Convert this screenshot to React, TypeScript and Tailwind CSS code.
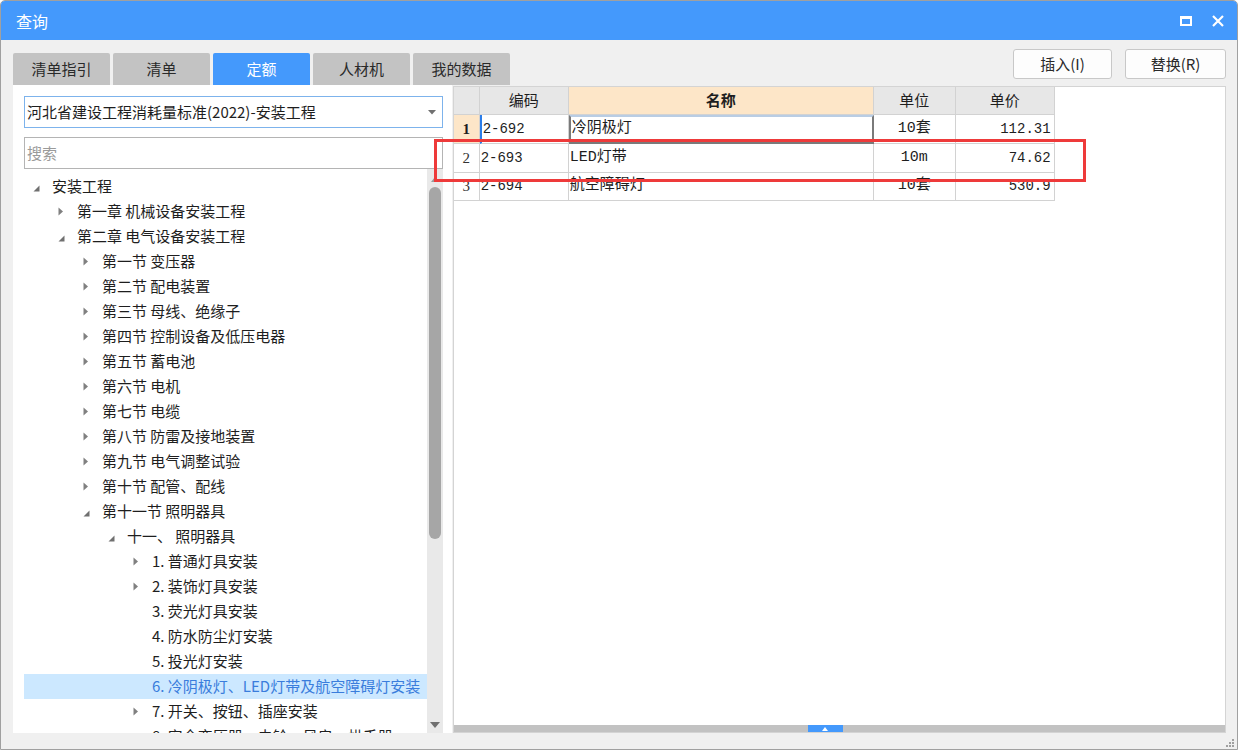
import React from 'react';

type Node = { label: string; level: number; state: 'open' | 'closed' | 'leaf'; selected?: boolean };

const tree: Node[] = [
  { label: '安装工程', level: 0, state: 'open' },
  { label: '第一章 机械设备安装工程', level: 1, state: 'closed' },
  { label: '第二章 电气设备安装工程', level: 1, state: 'open' },
  { label: '第一节 变压器', level: 2, state: 'closed' },
  { label: '第二节 配电装置', level: 2, state: 'closed' },
  { label: '第三节 母线、绝缘子', level: 2, state: 'closed' },
  { label: '第四节 控制设备及低压电器', level: 2, state: 'closed' },
  { label: '第五节 蓄电池', level: 2, state: 'closed' },
  { label: '第六节 电机', level: 2, state: 'closed' },
  { label: '第七节 电缆', level: 2, state: 'closed' },
  { label: '第八节 防雷及接地装置', level: 2, state: 'closed' },
  { label: '第九节 电气调整试验', level: 2, state: 'closed' },
  { label: '第十节 配管、配线', level: 2, state: 'closed' },
  { label: '第十一节 照明器具', level: 2, state: 'open' },
  { label: '十一、 照明器具', level: 3, state: 'open' },
  { label: '1. 普通灯具安装', level: 4, state: 'closed' },
  { label: '2. 装饰灯具安装', level: 4, state: 'closed' },
  { label: '3. 荧光灯具安装', level: 4, state: 'leaf' },
  { label: '4. 防水防尘灯安装', level: 4, state: 'leaf' },
  { label: '5. 投光灯安装', level: 4, state: 'leaf' },
  { label: '6. 冷阴极灯、LED灯带及航空障碍灯安装', level: 4, state: 'leaf', selected: true },
  { label: '7. 开关、按钮、插座安装', level: 4, state: 'closed' },
  { label: '8. 安全变压器、电铃、风扇、烘手器', level: 4, state: 'leaf' },
];

// 缩进
const indent = ['pl-[9px]', 'pl-[34px]', 'pl-[59px]', 'pl-[84px]', 'pl-[109px]'];

const rows = [
  { no: '1', code: '2-692', name: '冷阴极灯', unit: '10套', price: '112.31' },
  { no: '2', code: '2-693', name: 'LED灯带', unit: '10m', price: '74.62' },
  { no: '3', code: '2-694', name: '航空障碍灯', unit: '10套', price: '530.9' },
];

const tabs = ['清单指引', '清单', '定额', '人材机', '我的数据'];

function Arrow({ state }: { state: Node['state'] }) {
  if (state === 'open')
    return (
      <svg width="7" height="7" className="mt-[3px]">
        <path d="M6.5 0.5 L6.5 6.5 L0.5 6.5Z" fill="#707070" />
      </svg>
    );
  if (state === 'closed')
    return (
      <svg width="6" height="9">
        <path d="M0.5 0.5 L5 4.5 L0.5 8.5Z" fill="#808080" />
      </svg>
    );
  return null;
}

export default function App() {
  return (
    <div className="relative w-[1238px] h-[750px] flex flex-col bg-[#f0f0f0] border border-[#a0a0a0] rounded-t-[5px] overflow-hidden font-['Noto_Sans_CJK_SC',sans-serif] text-[#1e1e1e]">
      {/* 标题栏 */}
      <div className="h-[39px] shrink-0 bg-[#4499fc] flex items-center pl-[15px] pr-[13px]">
        <span className="text-white text-[16px] leading-none">查询</span>
        <div className="ml-auto flex items-center gap-[20px]">
          <div className="w-[12px] h-[10px] border-2 border-t-[3px] border-white" />
          <svg width="12" height="12">
            <path d="M1 1 L11 11 M11 1 L1 11" stroke="white" strokeWidth="2.2" />
          </svg>
        </div>
      </div>

      {/* 页签 + 按钮 */}
      <div className="h-[45px] shrink-0 flex pl-[12px] pr-[11px]">
        <div className="flex gap-[3px] items-end">
          {tabs.map((t) => (
            <div
              key={t}
              className={
                'w-[97px] h-[32px] flex items-center justify-center text-[15px] rounded-t-[2px] ' +
                (t === '定额' ? 'bg-[#4499fc] text-white' : 'bg-[#c3c3c3] text-[#2a2a2a]')
              }
            >
              {t}
            </div>
          ))}
        </div>
        <div className="ml-auto flex gap-[13px] pt-[9px]">
          <button className="w-[99px] h-[30px] bg-[#fdfdfd] border border-[#c8c8c8] rounded-[3px] text-[15px] text-[#2a2a2a]">
            插入(I)
          </button>
          <button className="w-[101px] h-[30px] bg-[#fdfdfd] border border-[#c8c8c8] rounded-[3px] text-[15px] text-[#2a2a2a]">
            替换(R)
          </button>
        </div>
      </div>

      {/* 主体 */}
      <div className="h-[648px] shrink-0 flex pl-[12px] pr-[11px]">
        {/* 左侧 */}
        <div className="w-[439px] bg-white flex flex-col pl-[11px] pr-[9px] pt-[11px]">
          <div className="h-[32px] border border-[#7db3ec] flex items-center pl-[2px] pr-[6px] text-[15px]">
            <span>河北省建设工程消耗量标准(2022)-安装工程</span>
            <svg width="8" height="5" className="ml-auto">
              <path d="M0 0 L8 0 L4 4.5Z" fill="#707070" />
            </svg>
          </div>
          <div className="h-[32px] mt-[9px] border border-[#b4b4b4] flex items-center pl-[2px] text-[15px] text-[#9a9a9a]">
            搜索
          </div>
          <div className="flex-1 flex min-h-0">
            <div className="flex-1 pt-[5px] overflow-hidden">
              {tree.map((n) => (
                <div
                  key={n.label}
                  className={
                    'h-[25px] flex items-center text-[15px] whitespace-nowrap ' +
                    indent[n.level] +
                    (n.selected ? ' bg-[#cce8ff] text-[#3a7ddc]' : '')
                  }
                >
                  <div className="w-[19px] flex items-center">
                    <Arrow state={n.state} />
                  </div>
                  <span>{n.label}</span>
                </div>
              ))}
            </div>
            {/* 滚动条 */}
            <div className="w-[16px] bg-[#e9e9e9] flex flex-col items-center">
              <svg width="8" height="5" className="mt-[8px]">
                <path d="M4 0 L8 5 L0 5Z" fill="#9a9a9a" />
              </svg>
              <div className="w-[12px] h-[352px] mt-[5px] rounded-full bg-[#a6a6a6]" />
              <svg width="10" height="6" className="mt-auto mb-[5px]">
                <path d="M0 0 L10 0 L5 6Z" fill="#707070" />
              </svg>
            </div>
          </div>
        </div>

        {/* 右侧 */}
        <div className="w-[774px] ml-px mt-px bg-white border border-[#d4d4d4] flex flex-col">
          <div className="flex-1 font-['Liberation_Mono','Noto_Sans_CJK_SC',monospace] text-[14px]">
            <div className="flex h-[28px] font-['Noto_Sans_CJK_SC',sans-serif] text-[15px]">
              <div className="w-[26px] bg-[#e7e7e7] border-r border-b border-[#d2d2d2]" />
              <div className="w-[89px] bg-[#e7e7e7] border-r border-b border-[#d2d2d2] flex items-center justify-center">编码</div>
              <div className="w-[305px] bg-[#fde6c8] border-r border-b border-[#d2d2d2] flex items-center justify-center font-bold">名称</div>
              <div className="w-[82px] bg-[#e7e7e7] border-r border-b border-[#d2d2d2] flex items-center justify-center">单位</div>
              <div className="w-[99px] bg-[#e7e7e7] border-r border-b border-[#d2d2d2] flex items-center justify-center">单价</div>
            </div>
            {rows.map((r, i) => (
              <div key={r.no} className={'flex ' + (i === 2 ? 'h-[28px]' : 'h-[29px]')}>
                <div
                  className={
                    "w-[26px] border-r border-b border-[#d2d2d2] flex items-center justify-center font-['Liberation_Serif',serif] text-[15px] " +
                    (i === 0 ? 'bg-[#fde6c8] font-bold' : 'text-[#333]')
                  }
                >
                  {r.no}
                </div>
                <div
                  className={
                    'w-[89px] border-r border-b border-[#d2d2d2] flex items-center pl-[1px] ' +
                    (i === 0 ? 'border-l-2 border-l-[#2b7de9]' : '')
                  }
                >
                  {r.code}
                </div>
                <div
                  className={
                    'w-[305px] flex items-center pl-[1px] text-[15px] ' +
                    (i === 0 ? 'border-2 border-[#7a7a7a] border-t-[#b9cde4]' : 'border-r border-b border-[#d2d2d2]')
                  }
                >
                  {r.name}
                </div>
                <div className="w-[82px] border-r border-b border-[#d2d2d2] flex items-center justify-center text-[15px]">
                  {r.unit}
                </div>
                <div className="w-[99px] border-r border-b border-[#d2d2d2] flex items-center justify-end pr-[3px]">
                  {r.price}
                </div>
              </div>
            ))}
          </div>
          {/* 水平滚动条 */}
          <div className="h-[7px] bg-[#c2c2c2] flex">
            <div className="ml-[354px] w-[35px] h-full bg-[#4499fc] flex items-center justify-center">
              <svg width="6" height="4">
                <path d="M3 0 L6 4 L0 4Z" fill="white" />
              </svg>
            </div>
          </div>
        </div>
      </div>

      {/* 底部 */}
      <div className="flex-1 flex justify-end items-end pr-[3px] pb-[2px]">
        <svg width="10" height="10">
          {[
            [8, 0],
            [8, 3],
            [5, 3],
            [8, 6],
            [5, 6],
            [2, 6],
          ].map(([x, y]) => (
            <rect key={x + '-' + y} x={x} y={y + 2} width="2" height="2" fill="#a0a0a0" />
          ))}
        </svg>
      </div>

      {/* 红框标注 */}
      <div className="absolute left-[433px] top-[138px] w-[652px] h-[43px] border-[3px] border-[#ee3a3a] pointer-events-none" />
    </div>
  );
}
